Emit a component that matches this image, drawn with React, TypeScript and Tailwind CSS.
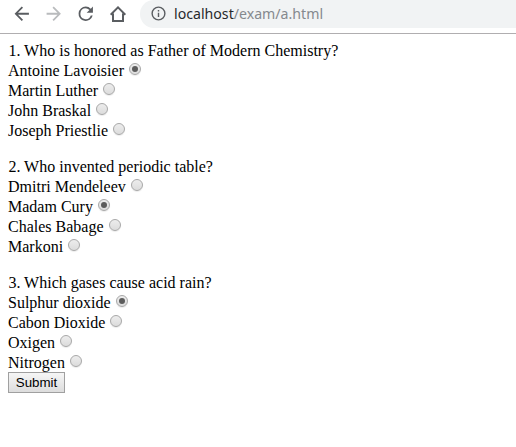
type Question = { title: string; options: string[]; selected: number };

const questions: Question[] = [
  {
    title: "1. Who is honored as Father of Modern Chemistry?",
    options: ["Antoine Lavoisier", "Martin Luther", "John Braskal", "Joseph Priestlie"],
    selected: 0,
  },
  {
    title: "2. Who invented periodic table?",
    options: ["Dmitri Mendeleev", "Madam Cury", "Chales Babage", "Markoni"],
    selected: 1,
  },
  {
    title: "3. Which gases cause acid rain?",
    options: ["Sulphur dioxide", "Cabon Dioxide", "Oxigen", "Nitrogen"],
    selected: 0,
  },
];

function Icon({ d, className }: { d: string; className: string }) {
  return (
    <svg viewBox="0 0 24 24" fill="currentColor" className={`shrink-0 ${className}`}>
      <path d={d} />
    </svg>
  );
}

function Toolbar() {
  return (
    <header className="flex h-[34px] items-start border-b border-[#b0aeb0] bg-white text-[#5a5d61]">
      <div className="flex h-7 w-[140px] shrink-0 items-center pl-[11px]">
        <Icon className="size-[21.5px]" d="M20 11H7.83l5.59-5.59L12 4l-8 8 8 8 1.41-1.41L7.83 13H20v-2z" />
        <Icon className="ml-[10.5px] size-[21.5px] text-[#b9bbbd]" d="M12 4l-1.41 1.41L16.17 11H4v2h12.17l-5.58 5.59L12 20l8-8z" />
        <Icon
          className="ml-[10.5px] size-[21.5px]"
          d="M17.65 6.35A7.96 7.96 0 0 0 12 4a8 8 0 1 0 7.73 10h-2.08A6 6 0 1 1 12 6c1.66 0 3.14.69 4.22 1.78L13 11h7V4l-2.35 2.35z"
        />
        <svg viewBox="0 0 16 16" className="ml-[13px] size-4 shrink-0" fill="none" stroke="currentColor" strokeWidth="2">
          <path d="M.6 8.7 8 1.4l7.4 7.3M3 7.5V15h10V7.5" />
        </svg>
      </div>
      <div className="flex h-7 flex-1 items-center rounded-l-full bg-[#f1f3f4] pl-[9.5px]">
        <Icon
          className="mb-px size-[17px]"
          d="M11 17h2v-6h-2v6zm1-15a10 10 0 1 0 0 20 10 10 0 0 0 0-20zm0 18a8 8 0 1 1 0-16 8 8 0 0 1 0 16zM11 9h2V7h-2v2z"
        />
        <span className="ml-[7.5px] font-['Noto_Sans',sans-serif] text-[14.15px] leading-5 text-[#27292c]">
          localhost<span className="text-[#85898e]">/exam/a.html</span>
        </span>
      </div>
    </header>
  );
}

function Radio({ name, label, checked }: { name: string; label: string; checked: boolean }) {
  return (
    <label className="flex h-5 w-fit">
      <span>{label}</span>
      <input
        type="radio"
        name={name}
        defaultChecked={checked}
        className="mt-[2px] ml-[5px] grid size-3 appearance-none place-items-center rounded-full border border-[#a8a8a8] bg-linear-to-b from-[#ededed] to-[#dcdcdc] shadow-[0_1px_1px_rgba(0,0,0,0.08)] before:size-[6px] before:rounded-full checked:before:bg-[#5c5c5c] checked:before:content-['']"
      />
    </label>
  );
}

export default function App() {
  return (
    <div className="min-h-screen bg-white">
      <Toolbar />
      <form
        className="px-2 pt-[7px] font-['Liberation_Serif',serif] text-[16px] leading-5 text-black"
        onSubmit={(e) => e.preventDefault()}
      >
        <div className="flex flex-col gap-4">
          {questions.map((q) => (
            <fieldset key={q.title}>
              <p className="pl-[0.4px]">{q.title}</p>
              {q.options.map((option, i) => (
                <Radio key={option} name={q.title} label={option} checked={i === q.selected} />
              ))}
            </fieldset>
          ))}
        </div>
        <button className="-mt-px flex h-[21px] w-[57px] items-center justify-center border border-[#a0a0a0] bg-linear-to-b from-[#f6f6f6] to-[#dddddd] font-['Liberation_Sans',sans-serif] text-[13.33px] leading-none">
          Submit
        </button>
      </form>
    </div>
  );
}
